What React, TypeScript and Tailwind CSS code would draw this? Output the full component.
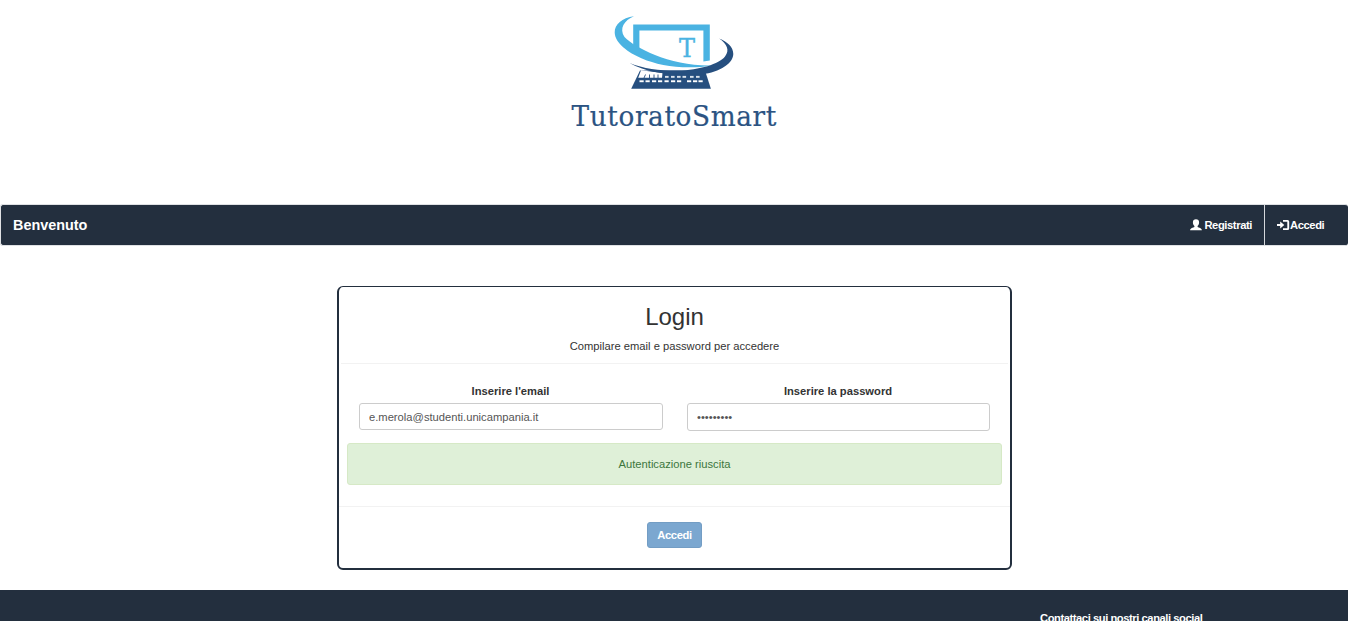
import { useState } from "react";

const KEYS_TOP = [665, 671, 677, 682.5, 690, 696];
const KEYS_MID = [639.5, 645.5, 652, 658, 664.5, 671, 677, 687, 693, 698.5];

function Logo() {
  return (
    <svg
      viewBox="554 0 240 140"
      className="h-[140px] w-[240px]"
      role="img"
      aria-label="TutoratoSmart"
    >
      <path d="M633.2 48V24.4h76.6v36.2l-6.4 1V30.6h-64V54Z" fill="#4ab3e2" />
      <path
        d="M634 16.2C622 18 614.5 24 614.7 32.5C615 43 628 52.5 642 58.5C659 66 686 70 712.5 65.4C692 66 671 61.8 655 55C642 49.500 630 43 624.500 37C619 28.500 624 20.500 634 16.200Z"
        fill="#4ab3e2"
      />
      <path d="M640 70.500H705L710.900 88.800H631.200Z" fill="#264f7f" />
      <path d="M641 70.200L638.200 77.800H662L662.500 73Z" fill="#fff" />
      <path
        d="M645.500 74.500L644 78M649.500 74.500V78M654 74.500V78M658 74.500V78"
        stroke="#264f7f"
        strokeWidth="0.900"
      />
      {KEYS_TOP.map((x) => (
        <rect key={x} x={x} y="75.900" width="3.600" height="1.900" fill="#dce4ec" />
      ))}
      {KEYS_MID.map((x) => (
        <rect key={x} x={x} y="80.300" width="4.200" height="1.900" fill="#fff" />
      ))}
      <path
        d="M629.500 63C644 69 661 70.800 678 70.600C700 70 719 64 725 56.500C730 50 727 44 719.200 38.500C727 41.500 733.500 47 733.300 54C733 65 716 73.500 699 74.500C675 75.500 647 73.500 629.500 63Z"
        fill="#264f7f"
      />
      <text
        x="679"
        y="56.500"
        textLength="16"
        lengthAdjust="spacingAndGlyphs"
        fill="#4ab3e2"
        stroke="#4ab3e2"
        strokeWidth="0.400"
        className="font-['DejaVu_Serif',serif] text-[26px]"
      >
        T
      </text>
      <text
        x="571.500"
        y="126"
        textLength="205.500"
        lengthAdjust="spacingAndGlyphs"
        fill="#2b5382"
        stroke="#2b5382"
        strokeWidth="0.200"
        className="font-['DejaVu_Serif_Condensed','DejaVu_Serif',serif] text-[28px] tracking-[0.6px] [font-stretch:condensed]"
      >
        TutoratoSmart
      </text>
    </svg>
  );
}

function UserIcon() {
  return (
    <svg viewBox="0 0 12 12" className="h-3 w-3" fill="currentColor">
      <path d="M6 .3C4 .3 2.900 1.500 2.900 3.300C2.900 5 3.500 6.300 4.400 7.100V8C3.200 8.700 .1 9.200 .1 11.300H11.900C11.900 9.200 8.800 8.700 7.600 8V7.100C8.500 6.300 9.100 5 9.100 3.300C9.100 1.500 8 .3 6 .3Z" />
    </svg>
  );
}

function LoginIcon() {
  return (
    <svg viewBox="0 0 13 12" className="h-3 w-[13px]" fill="currentColor">
      <path d="M0 4.900H3.200V2.400L7.300 6L3.200 9.600V7.100H0Z" />
      <path d="M6 1H10.600Q12.200 1 12.200 2.600V9.400Q12.200 11 10.600 11H6V9.300H10.300V2.700H6Z" />
    </svg>
  );
}

export default function App() {
  const [email, setEmail] = useState("e.merola@studenti.unicampania.it");
  const [password, setPassword] = useState("password1");

  return (
    <div className="flex h-[621px] w-full flex-col overflow-hidden bg-white font-['Liberation_Sans',Arial,sans-serif] text-[11.2px] leading-4 text-[#333]">
      <header className="flex h-[204px] shrink-0 justify-center">
        <Logo />
      </header>

      <nav className="flex h-[42px] shrink-0 justify-between rounded-[3px] border border-r-0 border-[#dfe1e4] bg-[#232f3e] font-bold text-white">
        <a href="#" className="flex items-center pl-3 text-[14.4px]">
          Benvenuto
        </a>
        <div className="flex pr-3">
          <a href="#" className="flex items-center gap-[2px] border-r border-[#d5d8dc] pr-3 tracking-[-0.4px]">
            <UserIcon />
            Registrati
          </a>
          <a href="#" className="flex w-[71px] items-center pl-3 tracking-[-0.4px]">
            <LoginIcon />
            Accedi
          </a>
        </div>
      </nav>

      <main className="mt-10 flex shrink-0 justify-center">
        <form
          className="flex h-[284px] w-[675px] flex-col rounded-md border-2 border-t border-[#232f3e] text-center"
          onSubmit={(e) => e.preventDefault()}
        >
          <div className="mx-0.5 h-[77px] border-b border-[#f2f2f2] pt-4 pl-px">
            <h2 className="text-2xl leading-[27px]">Login</h2>
            <p className="mt-2">Compilare email e password per accedere</p>
          </div>
          <div className="flex h-[79px] gap-6 px-5 pt-[19px]">
            <label className="flex w-[304px] flex-col font-bold">
              Inserire l'email
              <input
                type="text"
                value={email}
                onChange={(e) => setEmail(e.target.value)}
                className="mt-1 h-[27px] rounded-[3px] border border-[#ccc] px-[9.5px] font-normal text-[#555]"
              />
            </label>
            <label className="flex w-[303px] flex-col font-bold">
              Inserire la password
              <input
                type="password"
                value={password}
                onChange={(e) => setPassword(e.target.value)}
                className="mt-1 h-7 shrink-0 rounded-[3px] border border-[#ccc] px-[9.5px] font-normal text-[#555]"
              />
            </label>
          </div>
          <div className="mx-2 flex h-[42px] items-center justify-center rounded-[3px] border border-[#d6e9c6] bg-[#dff0d8] pl-px text-[#3c763d]">
            Autenticazione riuscita
          </div>
          <div className="mt-[21px] border-t border-[#f2f2f2] pt-[15px]">
            <button
              disabled
              className="h-[26px] w-[55px] rounded-[3px] border border-[#739dc4] bg-[#7ba7d0] pl-px font-bold tracking-[-0.4px] text-white"
            >
              Accedi
            </button>
          </div>
        </form>
      </main>

      <footer className="mt-5 flex flex-1 justify-end bg-[#232f3e] pt-5 pr-[145px] font-bold text-white">
        <p className="h-4 w-[163px] tracking-[-0.44px] whitespace-nowrap">Contattaci sui nostri canali social</p>
      </footer>
    </div>
  );
}
